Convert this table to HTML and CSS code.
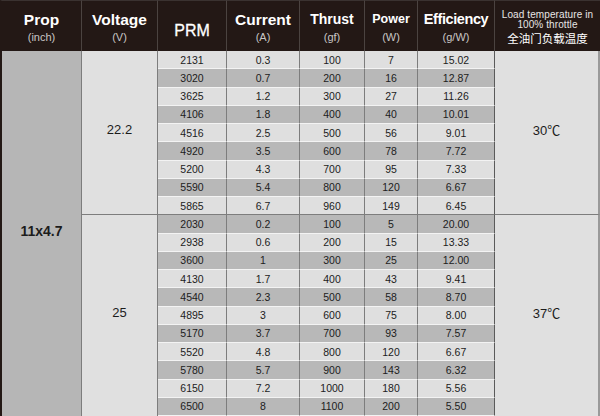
FILE: index.html
```html
<!DOCTYPE html>
<html>
<head>
<meta charset="utf-8">
<link rel="stylesheet" href="styles.css">
</head>
<body>
<div class="sheet">
  <div class="hd"><span class="t">Prop</span><span class="s">(inch)</span></div>
  <div class="hd"><span class="t">Voltage</span><span class="s">(V)</span></div>
  <div class="hd"><span class="t prm">PRM</span></div>
  <div class="hd"><span class="t">Current</span><span class="s">(A)</span></div>
  <div class="hd"><span class="t thr">Thrust</span><span class="s">(gf)</span></div>
  <div class="hd"><span class="t pw">Power</span><span class="s">(W)</span></div>
  <div class="hd"><span class="t eff">Efficiency</span><span class="s">(g/W)</span></div>
  <div class="hd last"><span class="l">Load temperature in</span><span class="l">100% throttle</span><span class="cn">全油门负载温度</span></div>

  <div class="prop">11x4.7</div>
  <div class="volt g1">22.2</div>
  <div class="volt g2">25</div>
  <div class="temp g1">30℃</div>
  <div class="temp g2">37℃</div>

  <div class="row"><div>2131</div><div>0.3</div><div>100</div><div>7</div><div>15.02</div></div>
  <div class="row dk"><div>3020</div><div>0.7</div><div>200</div><div>16</div><div>12.87</div></div>
  <div class="row"><div>3625</div><div>1.2</div><div>300</div><div>27</div><div>11.26</div></div>
  <div class="row dk"><div>4106</div><div>1.8</div><div>400</div><div>40</div><div>10.01</div></div>
  <div class="row"><div>4516</div><div>2.5</div><div>500</div><div>56</div><div>9.01</div></div>
  <div class="row dk"><div>4920</div><div>3.5</div><div>600</div><div>78</div><div>7.72</div></div>
  <div class="row"><div>5200</div><div>4.3</div><div>700</div><div>95</div><div>7.33</div></div>
  <div class="row dk"><div>5590</div><div>5.4</div><div>800</div><div>120</div><div>6.67</div></div>
  <div class="row gend"><div>5865</div><div>6.7</div><div>960</div><div>149</div><div>6.45</div></div>
  <div class="row dk"><div>2030</div><div>0.2</div><div>100</div><div>5</div><div>20.00</div></div>
  <div class="row"><div>2938</div><div>0.6</div><div>200</div><div>15</div><div>13.33</div></div>
  <div class="row dk"><div>3600</div><div>1</div><div>300</div><div>25</div><div>12.00</div></div>
  <div class="row"><div>4130</div><div>1.7</div><div>400</div><div>43</div><div>9.41</div></div>
  <div class="row dk"><div>4540</div><div>2.3</div><div>500</div><div>58</div><div>8.70</div></div>
  <div class="row"><div>4895</div><div>3</div><div>600</div><div>75</div><div>8.00</div></div>
  <div class="row dk"><div>5170</div><div>3.7</div><div>700</div><div>93</div><div>7.57</div></div>
  <div class="row"><div>5520</div><div>4.8</div><div>800</div><div>120</div><div>6.67</div></div>
  <div class="row dk"><div>5780</div><div>5.7</div><div>900</div><div>143</div><div>6.32</div></div>
  <div class="row"><div>6150</div><div>7.2</div><div>1000</div><div>180</div><div>5.56</div></div>
  <div class="row dk"><div>6500</div><div>8</div><div>1100</div><div>200</div><div>5.50</div></div>
</div>
</body>
</html>
```
FILE: styles.css
```css
html, body {
  margin: 0;
  padding: 0;
  background: #ffffff;
}
body {
  font-family: "Liberation Sans", Arial, "Noto Sans CJK SC", sans-serif;
  color: #1c1c1c;
}
.sheet {
  width: 600px;
  height: 416px;
  display: grid;
  grid-template-columns: 82px 76px 69px 73px 65px 53px 77px 1fr;
  grid-template-rows: 51px repeat(20, 1fr);
  overflow: hidden;
}
.hd {
  background: #231815;
  color: #ffffff;
  display: flex;
  flex-direction: column;
  align-items: center;
  justify-content: center;
  border-right: 1px solid #4b4340;
  border-top: 1px solid #3a3230;
  padding-top: 2px;
}
.hd:first-child {
  border-left: 2px solid #231815;
}
.hd .t {
  font-weight: bold;
  font-size: 15.5px;
  line-height: 19px;
}
.hd .t.thr {
  font-size: 14px;
}
.hd .t.pw {
  font-size: 12.5px;
}
.hd .t.eff {
  font-size: 14.5px;
  letter-spacing: -0.4px;
}
.hd .t.prm {
  font-weight: normal;
  font-size: 16px;
  padding-top: 6px;
  -webkit-text-stroke: 0.3px #ffffff;
}
.hd .s {
  font-size: 11px;
  line-height: 14px;
  margin-top: 1px;
  color: #c9c6c5;
}
.hd.last {
  border-right: none;
  padding-top: 2px;
}
.hd .l {
  font-size: 10px;
  line-height: 10px;
  color: #e8e6e5;
  letter-spacing: 0.1px;
}
.hd .cn {
  font-family: "Noto Sans CJK SC", sans-serif;
  font-size: 11.5px;
  line-height: 14px;
  margin-top: 1px;
}
.prop {
  grid-column: 1;
  grid-row: 2 / span 20;
  background: #b6b6b6;
  border-left: 2px solid #231815;
  border-right: 1px solid #7d7d7d;
  display: flex;
  align-items: center;
  justify-content: center;
  font-weight: bold;
  font-size: 14px;
  padding-bottom: 6px;
}
.volt, .temp {
  background: #e0e0e0;
  display: flex;
  align-items: center;
  justify-content: center;
  font-size: 13px;
  border-right: 1px solid #7d7d7d;
}
.temp {
  border-right: 2px solid #9a9a9a;
}
.volt { grid-column: 2; }
.temp { grid-column: 8; }
.g1 {
  grid-row: 2 / span 9;
  border-bottom: 1px solid #7d7d7d;
  padding-bottom: 6px;
}
.g2 {
  grid-row: 11 / span 11;
  padding-bottom: 6px;
}
.row {
  display: contents;
}
.row > div {
  background: #dfdfdf;
  border-right: 1px solid #7d7d7d;
  border-bottom: 1px solid #f3f3f3;
  font-size: 10.5px;
  display: flex;
  align-items: center;
  justify-content: center;
}
.row.dk > div {
  background: #b8b8b8;
}
.row > div:last-child {
  border-right: 1px solid #5a5a5a;
}
.row.gend > div {
  border-bottom: 1px solid #7d7d7d;
}
```
